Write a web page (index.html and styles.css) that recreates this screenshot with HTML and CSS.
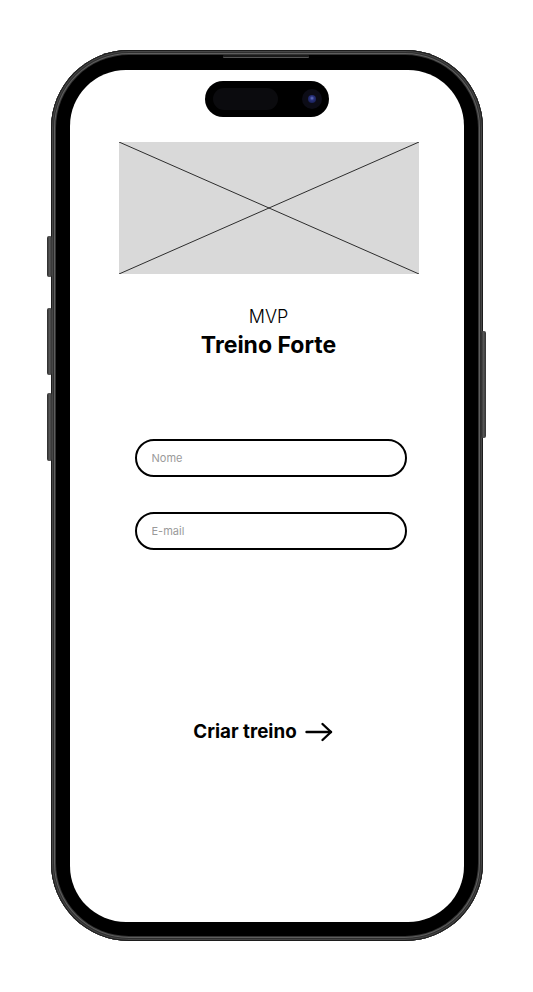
FILE: index.html
```html
<!DOCTYPE html>
<html lang="pt">
<head>
    <meta charset="UTF-8">
    <meta name="viewport" content="width=device-width, initial-scale=1.0">
    <title>Treino Forte</title>
    <link rel="stylesheet" href="styles.css">
</head>
<body>

<div class="stage">
    <div class="phone">
        <!-- botões laterais -->
        <span class="side-btn btn-action"></span>
        <span class="side-btn btn-vol-up"></span>
        <span class="side-btn btn-vol-down"></span>
        <span class="side-btn btn-power"></span>
        <span class="speaker"></span>

        <div class="bezel">
            <div class="screen">
                <div class="island">
                    <span class="island-pill"></span>
                    <span class="camera"><span class="lens"></span></span>
                </div>

                <svg class="placeholder" width="300" height="132" viewBox="0 0 300 132">
                    <rect width="300" height="132" fill="#d9d9d9"/>
                    <line x1="0" y1="0" x2="300" y2="132" stroke="#000" stroke-width="0.8"/>
                    <line x1="300" y1="0" x2="0" y2="132" stroke="#000" stroke-width="0.8"/>
                </svg>

                <div class="title">
                    <p class="subtitle">MVP</p>
                    <h1>Treino Forte</h1>
                </div>

                <form class="form" onsubmit="return false;">
                    <input type="text" class="field" placeholder="Nome">
                    <input type="email" class="field" placeholder="E-mail">
                </form>

                <button class="create-btn" type="button">
                    Criar treino
                    <svg width="28" height="20" viewBox="0 0 28 20" fill="none" stroke="#000" stroke-width="2.4" stroke-linecap="round" stroke-linejoin="round">
                        <path d="M1.5 10 H26"/>
                        <path d="M17.5 2 L26 10 L17.5 18"/>
                    </svg>
                </button>
            </div>
        </div>
    </div>
</div>

</body>
</html>
```

FILE: styles.css
```css
body {
    background-color: #fff;
    color: #000;
    font-family: Inter, "Noto Sans", Arial, sans-serif;
    margin: 0;
    padding: 0;
}

.stage {
    display: flex;
    justify-content: center;
    padding-top: 50px;
}

.phone {
    position: relative;
    width: 432px;
    height: 891px;
    box-sizing: border-box;
    padding: 5px;
    border-radius: 78px;
    background-color: #333;
    box-shadow:
        inset 0 0 0 1px #1c1c1c,
        inset 0 0 0 2px #464646,
        inset 0 0 0 3px #2e2e2e,
        inset 0 0 0 4px #5e5e5e;
}

.bezel {
    height: 100%;
    box-sizing: border-box;
    padding: 15px 14px 14px;
    border-radius: 73px;
    background-color: #000;
}

.screen {
    height: 100%;
    box-sizing: border-box;
    padding-top: 11px;
    border-radius: 56px;
    background-color: #fff;
    display: flex;
    flex-direction: column;
    align-items: center;
}

/* botões laterais */
.side-btn {
    position: absolute;
    width: 5px;
    border-radius: 2px;
    background: linear-gradient(90deg, #2a2a2a, #555 50%, #333);
}

.btn-action {
    left: -4px;
    top: 186px;
    height: 41px;
}

.btn-vol-up {
    left: -4px;
    top: 258px;
    height: 67px;
}

.btn-vol-down {
    left: -4px;
    top: 343px;
    height: 68px;
}

.btn-power {
    right: -3px;
    top: 281px;
    height: 107px;
}

.speaker {
    position: absolute;
    top: 5px;
    left: 172px;
    width: 86px;
    height: 2px;
    border-radius: 1px;
    background-color: #1a1a1a;
    box-shadow: 0 1px 0 #555;
}

/* dynamic island */
.island {
    width: 124px;
    height: 36px;
    box-sizing: border-box;
    padding: 0 7px 0 8px;
    border-radius: 18px;
    background-color: #000;
    display: flex;
    align-items: center;
    justify-content: space-between;
}

.island-pill {
    width: 65px;
    height: 22px;
    border-radius: 11px;
    background-color: #0b0b0e;
}

.camera {
    width: 20px;
    height: 20px;
    border-radius: 50%;
    background-color: #0c0c16;
    display: flex;
    align-items: center;
    justify-content: center;
}

.lens {
    width: 8px;
    height: 8px;
    border-radius: 50%;
    background: radial-gradient(circle at 50% 40%, #6a78c8 0, #27307a 35%, #111640 100%);
}

.placeholder {
    display: block;
    margin: 25px 0 0 4px;
}

.title {
    margin-top: 32px;
    margin-left: 4px;
    text-align: center;
}

.subtitle {
    margin: 0;
    font-size: 18px;
    font-weight: 300;
    line-height: 22px;
}

.title h1 {
    margin: 4px 0 0;
    font-size: 23px;
    font-weight: 700;
    line-height: 26px;
}

.form {
    margin: 81px 0 0 8px;
    display: flex;
    flex-direction: column;
    gap: 35px;
}

.field {
    width: 272px;
    height: 38px;
    box-sizing: border-box;
    padding: 0 15px;
    border: 2px solid #000;
    border-radius: 19px;
    font-family: Inter, "Noto Sans", Arial, sans-serif;
    font-size: 11px;
    color: #000;
    outline: none;
}

.field::placeholder {
    color: #9a9a9a;
}

.create-btn {
    margin: 171px 7px 0 0;
    padding: 0;
    border: none;
    background: none;
    color: #000;
    font-family: Inter, "Noto Sans", Arial, sans-serif;
    font-size: 18.8px;
    font-weight: 700;
    line-height: 22px;
    display: flex;
    align-items: center;
    gap: 8px;
    cursor: pointer;
}
```
